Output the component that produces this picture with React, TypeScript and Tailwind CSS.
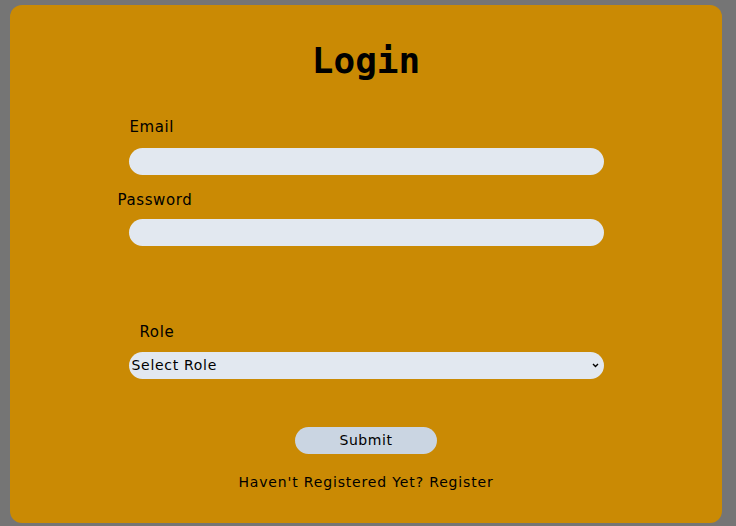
export default function App() {
  const font = { fontFamily: '"DejaVu Sans", "Liberation Sans", sans-serif' };
  return (
    <div className="min-h-screen bg-[#757575] pt-[5px] pl-[10px] pr-[14px] pb-[3px]" style={font}>
      <div className="h-[518px] rounded-[12px] bg-[#ca8a04] text-black pt-[34px]">
        <h1 className="text-center text-[36px] leading-[44px] font-bold" style={{ fontFamily: '"DejaVu Sans Mono", monospace' }}>
          Login
        </h1>
        <form className="mx-auto w-[475px] mt-[36px]" onSubmit={(e) => e.preventDefault()}>
          <label className="block pl-[1px] text-[15px] leading-[16px] tracking-[0.04em]">Email</label>
          <input type="email" className="mt-[13px] block h-[27px] w-full rounded-full bg-slate-200 outline-none px-3" />
          <label className="block -ml-[11px] mt-[17px] text-[15px] leading-[16px] tracking-[0.04em]">Password</label>
          <input type="password" className="mt-[11px] block h-[27px] w-full rounded-full bg-slate-200 outline-none px-3" />
          <label className="block pl-[11px] mt-[78px] text-[15px] leading-[16px] tracking-[0.04em]">Role</label>
          <div className="relative mt-[12px]">
            <select className="block h-[27px] w-full appearance-none rounded-full bg-slate-200 text-[14px] tracking-[0.05em] text-black pl-[3px] pr-6 outline-none">
              <option>Select Role</option>
              <option>Student</option>
              <option>Admin</option>
            </select>
            <svg className="pointer-events-none absolute right-[5px] top-[11px]" width="7" height="5" viewBox="0 0 7 5" fill="none">
              <path d="M1 1l2.5 2.5L6 1" stroke="#000" strokeWidth="1.4" />
            </svg>
          </div>
          <div className="mt-[48px] flex justify-center">
            <button type="submit" className="h-[27px] w-[142px] rounded-full bg-slate-300 text-[14px] tracking-[0.04em]">
              Submit
            </button>
          </div>
          <p className="mt-[20px] text-center text-[14px] leading-[16px] tracking-[0.06em]">
            Haven't Registered Yet? <span className="cursor-pointer">Register</span>
          </p>
        </form>
      </div>
    </div>
  );
}
